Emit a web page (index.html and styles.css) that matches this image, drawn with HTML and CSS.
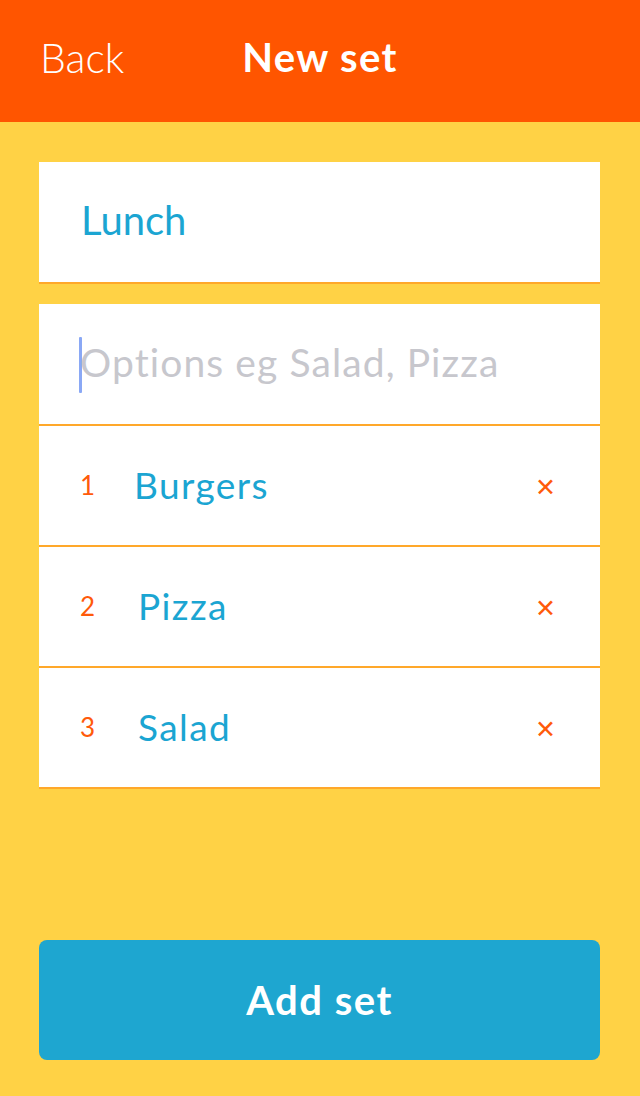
FILE: index.html
```html
<!DOCTYPE html>
<html lang="en">
<head>
<meta charset="utf-8">
<title>New set</title>
<link rel="stylesheet" href="styles.css">
</head>
<body>
<div class="app">
  <header class="topbar">
    <span class="back">Back</span>
    <h1 class="title">New set</h1>
    <span></span>
  </header>
  <main class="content">
    <div class="card name-card">
      <span class="name">Lunch</span>
    </div>
    <div class="card options">
      <div class="row input-row">
        <span class="cursor"></span>
        <span class="placeholder">Options eg Salad, Pizza</span>
      </div>
      <div class="row item">
        <span class="num">1</span>
        <span class="label label-1">Burgers</span>
        <span class="remove">&#x2715;</span>
      </div>
      <div class="row item">
        <span class="num">2</span>
        <span class="label">Pizza</span>
        <span class="remove">&#x2715;</span>
      </div>
      <div class="row item">
        <span class="num">3</span>
        <span class="label">Salad</span>
        <span class="remove">&#x2715;</span>
      </div>
    </div>
    <button class="add-btn">Add set</button>
  </main>
</div>
</body>
</html>
```

FILE: styles.css
```css
* { box-sizing: border-box; }
html, body { margin: 0; padding: 0; }
body {
  font-family: "Lato", "Noto Sans", sans-serif;
  background: #ffd245;
}
.app {
  height: 1096px;
  display: flex;
  flex-direction: column;
}
.topbar {
  height: 122px;
  background: #ff5500;
  display: grid;
  grid-template-columns: 1fr auto 1fr;
  align-items: center;
  padding: 0 40px 8px 40px;
  color: #fff;
}
.back {
  font-size: 41px;
  font-weight: 300;
}
.title {
  margin: 0;
  font-size: 40px;
  font-weight: 700;
  letter-spacing: 1.4px;
}
.content {
  flex: 1;
  display: flex;
  flex-direction: column;
  padding: 40px 40px 36px 39px;
}
.card {
  background: #fff;
}
.name-card {
  height: 122px;
  border-bottom: 2px solid #ffa82a;
  display: flex;
  align-items: center;
  padding-left: 42px;
  padding-bottom: 4px;
}
.name {
  color: #1ba5d2;
  font-size: 40px;
  font-weight: 400;
}
.options {
  margin-top: 20px;
  display: flex;
  flex-direction: column;
}
.row {
  height: 121px;
  border-bottom: 2px solid #ffa82a;
  display: flex;
  align-items: center;
}
.input-row {
  height: 122px;
  padding-left: 40px;
  padding-bottom: 4px;
}
.cursor {
  width: 3px;
  height: 56px;
  background: #8aa8f5;
  border-radius: 1px;
  margin-right: -2px;
  margin-top: 6px;
}
.placeholder {
  color: #c7c7cd;
  font-size: 39px;
  font-weight: 400;
  letter-spacing: 1.1px;
}
.item {
  padding-left: 41px;
  padding-right: 44px;
  padding-bottom: 2px;
}
.num {
  color: #ff5a0a;
  font-size: 26px;
  width: 58px;
}
.label {
  color: #1ba5d2;
  font-size: 37px;
  flex: 1;
  letter-spacing: 1.4px;
}
.label-1 { margin-left: -4px; }
.remove {
  color: #ff5a0a;
  font-size: 25px;
  font-family: "DejaVu Sans", sans-serif;
  font-weight: 300;
  margin-top: 5px;
}
.add-btn {
  margin-top: auto;
  height: 120px;
  width: 100%;
  border: none;
  border-radius: 8px;
  background: #1ea6d0;
  color: #fff;
  font-family: "Lato", "Noto Sans", sans-serif;
  font-size: 40px;
  font-weight: 700;
  letter-spacing: 1.5px;
}
```
